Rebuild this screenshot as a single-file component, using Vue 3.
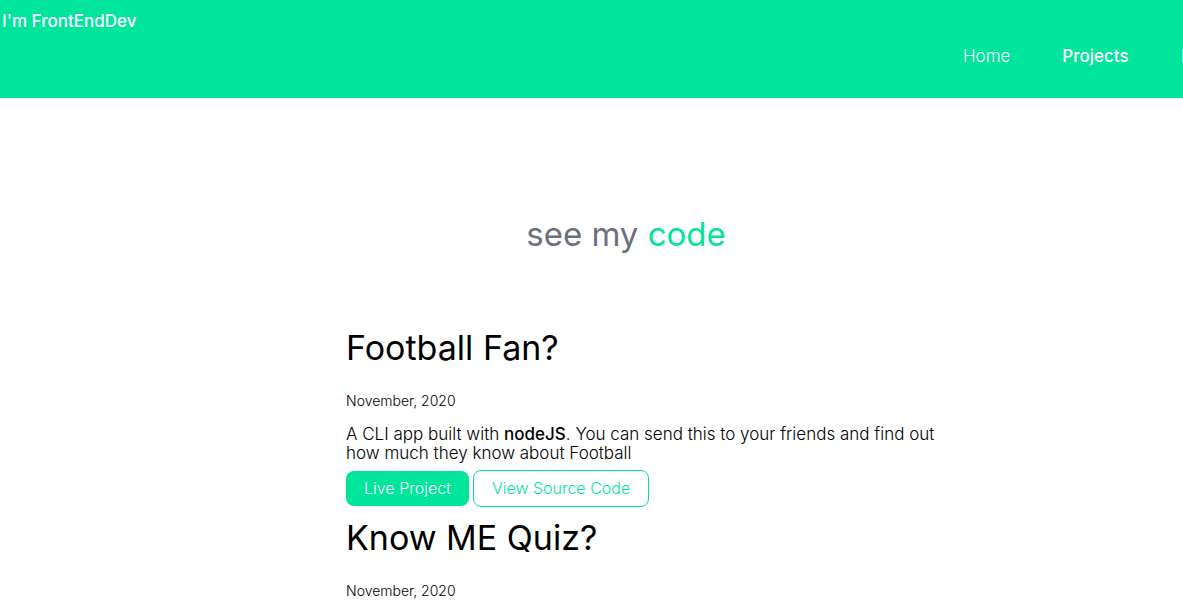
<script setup>
const links = [
  { label: 'Home', href: '#home', active: false },
  { label: 'Projects', href: '#projects', active: true },
  { label: 'Blog', href: '#blog', active: false },
]

const projects = [
  {
    title: 'Football Fan?',
    date: 'November, 2020',
    summary: {
      before: 'A CLI app built with ',
      tech: 'nodeJS',
      after: '. You can send this to your friends and find out how much they know about Football',
    },
  },
  {
    title: 'Know ME Quiz?',
    date: 'November, 2020',
  },
]
</script>

<template>
  <div class="page">
    <header class="header">
      <div class="brand">I'm FrontEndDev</div>
      <nav class="nav">
        <a v-for="link in links" :key="link.label" :href="link.href" :class="{ active: link.active }">{{ link.label }}</a>
      </nav>
    </header>
    <main class="main">
      <section class="section">
        <h1 class="heading">see my <span>code</span></h1>
        <div class="list">
          <article v-for="project in projects" :key="project.title" class="project">
            <h2>{{ project.title }}</h2>
            <small>{{ project.date }}</small>
            <template v-if="project.summary">
              <p>{{ project.summary.before }}<strong>{{ project.summary.tech }}</strong>{{ project.summary.after }}</p>
              <div class="actions">
                <a class="button primary" href="#live">Live Project</a>
                <a class="button outline" href="#source">View Source Code</a>
              </div>
            </template>
          </article>
        </div>
      </section>
    </main>
  </div>
</template>

<style>
body {
  margin: 0;
}
</style>

<style scoped>
.page {
  overflow: hidden;
  background: #fff;
  color: #000;
  font-family: Inter, "Open Sans", sans-serif;
  font-size: 17px;
  font-weight: 300;
  line-height: 19px;
}

.header {
  box-sizing: border-box;
  min-height: 98px;
  padding-top: 12px;
  overflow: hidden;
  background: #00e49c;
  color: #fff;
}

.brand {
  padding-left: 2px;
  font-weight: 500;
}

.nav {
  display: flex;
  gap: 52px;
  justify-content: flex-end;
  margin-top: 16px;
  margin-right: -33px;
}

.nav a {
  color: #fff;
  text-decoration: none;
}

.nav .active {
  font-weight: 500;
}

.main {
  padding-left: 69px;
}

.section {
  max-width: 640px;
  margin: 0 auto;
  padding-top: 116px;
}

.heading {
  margin: 0;
  color: #6b7080;
  font-size: 33px;
  font-weight: 400;
  line-height: 40px;
  text-align: center;
}

.heading span {
  color: #00e49c;
}

.list {
  display: flex;
  flex-direction: column;
  gap: 11px;
  padding: 74px 0 0 40px;
}

.project {
  display: flex;
  flex-direction: column;
}

.project h2 {
  margin: 0;
  font-size: 34px;
  font-weight: 400;
  line-height: 40px;
}

.project small {
  margin-top: 25px;
  font-size: 14px;
  line-height: 16px;
}

.project p {
  margin: 16px 0 7px;
}

.project strong {
  font-weight: 500;
}

.actions {
  display: flex;
  gap: 4px;
  align-items: center;
}

.button {
  padding: 8px 18px;
  border-radius: 8px;
  font-size: 16px;
  text-decoration: none;
}

.primary {
  background: #00e49c;
  color: #fff;
}

.outline {
  border: 1px solid #00e49c;
  color: #00e49c;
}
</style>
